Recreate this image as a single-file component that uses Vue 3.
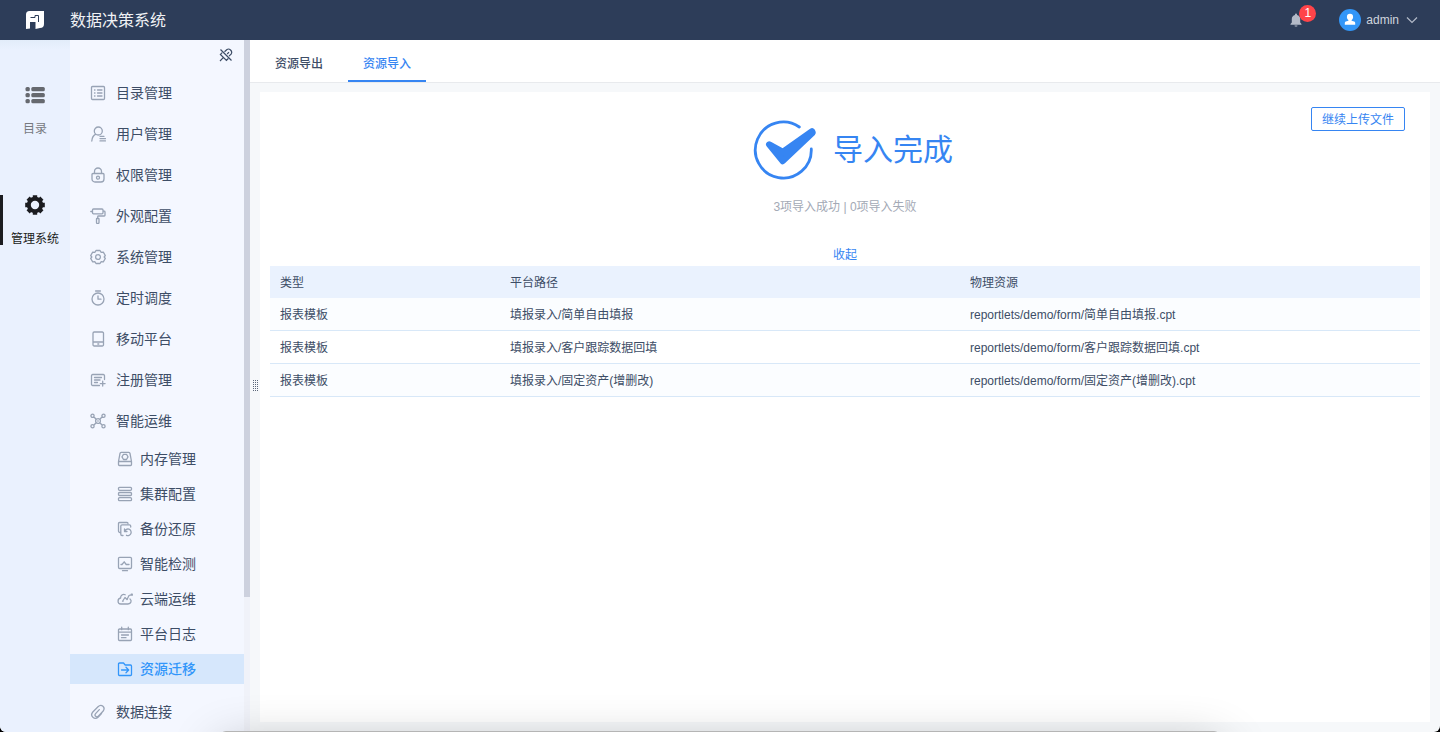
<template>
  <div class="page">
    <header class="header">
      <svg class="logo" viewBox="0 0 18 18">
        <path d="M3.500 0H18v13a4 4 0 0 1-4 4L9.500 18v-7H4v6.500L0 18V3.500A3.500 3.500 0 0 1 3.500 0z" fill="#fff" />
        <path d="M4.500 6.500h4.500V4.500h3.500V11" fill="none" stroke="#2d3d59" stroke-width="1" />
      </svg>
      <h1 class="title">数据决策系统</h1>
      <button class="bell" aria-label="消息">
        <svg viewBox="0 0 12 14">
          <path
            d="M6 0.500a1 1 0 0 1 1 1v.4c2 .5 3.200 2 3.200 4v3.600l1.300 1.500v.7H.5V11l1.300-1.500V5.900c0-2 1.200-3.500 3.200-4v-.4a1 1 0 0 1 1-1zM4.500 12.400h3a1.500 1.200 0 0 1-3 0z"
            fill="#b3bac8"
          />
        </svg>
        <span class="badge">1</span>
      </button>
      <button class="user">
        <svg class="avatar" viewBox="0 0 22 22">
          <circle cx="11" cy="11" r="11" fill="#3296f8" />
          <path
            d="M11 4.800a3.100 3.100 0 0 1 3.100 3.100c0 1.300-.6 2.300-1.500 3v.8l2.600.9c.7.300 1 .8 1 1.500v1.700H5.800v-1.700c0-.7.300-1.200 1-1.500l2.600-.9v-.8c-.9-.7-1.500-1.700-1.500-3A3.100 3.100 0 0 1 11 4.800z"
            fill="#fff"
          />
        </svg>
        <span>admin</span>
        <svg class="chevron" viewBox="0 0 12 8">
          <path d="M1 1.500l5 5 5-5" fill="none" stroke="#b3bac8" stroke-width="1.200" />
        </svg>
      </button>
    </header>

    <div class="body">
      <nav class="rail">
        <a href="#" class="rail-item">
          <svg viewBox="0 0 20 20" fill="#66696f">
            <template v-for="y in [2, 8, 14]" :key="y">
              <rect x="0.500" :y="y" width="4.300" height="4.300" rx="1.500" />
              <rect x="6.300" :y="y" width="13.500" height="4.300" rx="1.500" />
            </template>
          </svg>
          <span>目录</span>
        </a>
        <a href="#" class="rail-item active">
          <svg viewBox="0 0 20 20">
            <circle cx="10" cy="10" r="6.200" fill="none" stroke="#1b1c20" stroke-width="4" />
            <path
              d="M10 .2v3M10 16.800v3M.2 10h3M16.800 10h3M3.100 3.100l2 2M14.900 14.900l2 2M3.100 16.900l2-2M14.900 5.100l2-2"
              stroke="#1b1c20"
              stroke-width="4.400"
            />
          </svg>
          <span>管理系统</span>
        </a>
      </nav>

      <nav class="menu">
        <div class="menu-top">
          <button class="pin" aria-label="取消固定">
            <svg viewBox="0 0 14 14">
              <path
                d="M1.500 1.500l11 11M5.500 3.800L8 1.500c2.200-1.600 5.800 1.600 4.300 4.300l-2.300 2.400M3.200 4.600L1.400 6.400l6 6 1.900-1.900M4 9.900L1 13M8.200 6L10 4.200"
              />
            </svg>
          </button>
        </div>
        <template v-for="item in menu" :key="item.label">
          <a href="#" class="item">
            <svg class="icon" viewBox="0 0 16 16"><path :d="item.icon" /></svg>
            <span>{{ item.label }}</span>
          </a>
          <div v-if="item.children" class="sub-list">
            <a
              v-for="child in item.children"
              :key="child.label"
              href="#"
              class="sub-item"
              :class="{ active: child.label === current }"
              @click.prevent="current = child.label"
            >
              <svg class="icon" viewBox="0 0 16 16"><path :d="child.icon" /></svg>
              <span>{{ child.label }}</span>
            </a>
          </div>
        </template>
      </nav>
      <div class="scroll-track"><div class="scroll-thumb"></div></div>

      <main class="main">
        <div class="tabs">
          <button
            v-for="tab in tabs"
            :key="tab"
            class="tab"
            :class="{ active: tab === activeTab }"
            @click="activeTab = tab"
          >{{ tab }}</button>
        </div>
        <div class="content">
          <div class="splitter"><span class="grip"></span></div>
          <section class="panel">
            <div class="result">
              <div class="summary">
                <h2 class="result-title">
                  <svg viewBox="0 0 80 64">
                    <path
                      d="M62.300 9A28 28 0 1 0 74.300 31"
                      fill="none"
                      stroke="#3685f2"
                      stroke-width="2.800"
                      stroke-linecap="round"
                    />
                    <path
                      d="M32.300 26.500l13.700 7.500L75 13.500l.6 1.200L45.700 43z"
                      fill="#3685f2"
                      stroke="#3685f2"
                      stroke-width="6.500"
                      stroke-linejoin="round"
                    />
                  </svg>
                  <span>导入完成</span>
                </h2>
                <p class="counts">3项导入成功 | 0项导入失败</p>
                <button class="toggle" @click="expanded = !expanded">{{ expanded ? '收起' : '展开' }}</button>
              </div>
              <button class="upload">继续上传文件</button>
            </div>
            <table v-if="expanded" class="table">
              <thead>
                <tr>
                  <th class="type">类型</th>
                  <th>平台路径</th>
                  <th>物理资源</th>
                </tr>
              </thead>
              <tbody>
                <tr v-for="row in rows" :key="row.file">
                  <td>{{ row.type }}</td>
                  <td>{{ row.path }}</td>
                  <td>{{ row.file }}</td>
                </tr>
              </tbody>
            </table>
          </section>
        </div>
      </main>
    </div>
    <div class="bottom-shadow"></div>
  </div>
</template>

<script setup>
import { ref } from 'vue';

const current = ref('资源迁移');
const activeTab = ref('资源导入');
const expanded = ref(true);

const tabs = ['资源导出', '资源导入'];

const rows = [
  { type: '报表模板', path: '填报录入/简单自由填报', file: 'reportlets/demo/form/简单自由填报.cpt' },
  { type: '报表模板', path: '填报录入/客户跟踪数据回填', file: 'reportlets/demo/form/客户跟踪数据回填.cpt' },
  { type: '报表模板', path: '填报录入/固定资产(增删改)', file: 'reportlets/demo/form/固定资产(增删改).cpt' }
];

const menu = [
  {
    label: '目录管理',
    icon: 'M2.500 1.500h11a1 1 0 0 1 1 1v11a1 1 0 0 1-1 1h-11a1 1 0 0 1-1-1v-11a1 1 0 0 1 1-1zM4.500 5h.5M7.500 5h4.500M4.500 8h.5M7.500 8h4.500M4.500 11h.5M7.500 11h4.500'
  },
  {
    label: '用户管理',
    icon: 'M8.300 1a4 4 0 1 1 0 8a4 4 0 1 1 0-8M5.800 8.200C3.300 9.500 2 12 1.800 15M10 10.300h4M10 12.600h5.500M10 14.900h5.500'
  },
  {
    label: '权限管理',
    icon: 'M3 6.500h10a1 1 0 0 1 1 1V12a3 3 0 0 1-3 3H5a3 3 0 0 1-3-3V7.500a1 1 0 0 1 1-1zM4.500 6.500V4.500a3.500 3.500 0 0 1 7 0v2M8 9.200a1.500 1.500 0 1 1 0 3a1.500 1.500 0 1 1 0-3'
  },
  {
    label: '外观配置',
    icon: 'M3.500 1h8.500a1 1 0 0 1 1 1v2.800a1 1 0 0 1-1 1H3.500a1 1 0 0 1-1-1V2a1 1 0 0 1 1-1zM.8 3.500h1.700M13 3.200h1.200a.8.8 0 0 1 .8.800v3.200a.8.800 0 0 1-.8.800H8.500a.8.800 0 0 0-.8.800v1.700M7 10.500h1.500a.5.500 0 0 1 .5.500v3.500a1.200 1 0 0 1-2.500 0V11a.5.500 0 0 1 .5-.5z'
  },
  {
    label: '系统管理',
    icon: 'M6 1.500h4l1.200 1.800 2.100-.1 2 3.300-1.100 1.500 1.100 1.500-2 3.300-2.100-.1L10 14.500H6l-1.200-1.800-2.100.1-2-3.300L1.800 8 .7 6.500l2-3.300 2.100.1zM8 5.600a2.400 2.400 0 1 1 0 4.800a2.400 2.400 0 1 1 0-4.800'
  },
  {
    label: '定时调度',
    icon: 'M8 3a6 6 0 1 1 0 12a6 6 0 1 1 0-12M5.600 1h4.800M8 6v3.200h3'
  },
  {
    label: '移动平台',
    icon: 'M4.200 1h8.100a1.200 1.200 0 0 1 1.200 1.200v11.600a1.200 1.200 0 0 1-1.200 1.200H4.200A1.200 1.200 0 0 1 3 13.800V2.200A1.200 1.200 0 0 1 4.200 1zM3 11h10.500M7.800 13h1'
  },
  {
    label: '注册管理',
    icon: 'M14.500 7.500V3.700a1.200 1.200 0 0 0-1.200-1.200H2.700a1.200 1.200 0 0 0-1.200 1.200v8.600a1.200 1.200 0 0 0 1.200 1.200h6.800M4.500 5.500h7M4.500 8h5.500M4.500 10.500h3M12.700 9.200v4.800M10.300 11.600h4.800'
  },
  {
    label: '智能运维',
    icon: 'M2.500 1.200a1.600 1.600 0 1 1 0 3.200a1.600 1.600 0 1 1 0-3.200M13.500 1.200a1.600 1.600 0 1 1 0 3.200a1.600 1.600 0 1 1 0-3.200M2.500 11.600a1.600 1.600 0 1 1 0 3.200a1.600 1.600 0 1 1 0-3.200M13.500 11.600a1.600 1.600 0 1 1 0 3.200a1.600 1.600 0 1 1 0-3.200M8 5.600a2.400 2.400 0 1 1 0 4.800a2.400 2.400 0 1 1 0-4.800M3.800 3.800l2.300 2.500M12.200 3.800L9.900 6.300M3.800 12.200l2.300-2.500M12.200 12.200L9.900 9.700M7.800 8h.4',
    children: [
      {
        label: '内存管理',
        icon: 'M1.500 10.500L3 2.300A1.200 1.200 0 0 1 4.200 1.300h7.600A1.200 1.200 0 0 1 13 2.300l1.500 8.200M1.500 10.500h13v3a1 1 0 0 1-1 1h-11a1 1 0 0 1-1-1zM6.500 3.300h3L11 5.900 9.500 8.500h-3L5 5.900z'
      },
      {
        label: '集群配置',
        icon: 'M2.500 1.300h11a1 1 0 0 1 1 1v1a1 1 0 0 1-1 1h-11a1 1 0 0 1-1-1v-1a1 1 0 0 1 1-1zM2.500 6.500h11a1 1 0 0 1 1 1v1a1 1 0 0 1-1 1h-11a1 1 0 0 1-1-1v-1a1 1 0 0 1 1-1zM2.500 11.700h11a1 1 0 0 1 1 1v1a1 1 0 0 1-1 1h-11a1 1 0 0 1-1-1v-1a1 1 0 0 1 1-1z'
      },
      {
        label: '备份还原',
        icon: 'M3 11.500a1.500 1.500 0 0 1-1.500-1.500V2.500a1 1 0 0 1 1-1h7.500a1 1 0 0 1 1 1M6 14.500H5a1.200 1.200 0 0 1-1.200-1.200V5A1.200 1.200 0 0 1 5 3.800h7.500A1.200 1.200 0 0 1 13.700 5v1M7.500 8v2.500H10M7.700 10.300a3.300 3.300 0 1 1 1.800 4'
      },
      {
        label: '智能检测',
        icon: 'M2.700 1.300h10.600a1.200 1.200 0 0 1 1.200 1.200v8.800a1.200 1.200 0 0 1-1.200 1.200H2.700a1.200 1.200 0 0 1-1.200-1.200V2.500a1.200 1.200 0 0 1 1.200-1.200zM4 8.500h1L7.200 5.800l2 2.700h2.800M5.500 14.700h5'
      },
      {
        label: '云端运维',
        icon: 'M8.200 3.800C5.800 2.500 3.500 4.500 3.600 7 .2 7.500.2 13 3.800 13H11c3.200 0 4-3.500 2-5M6 9.500l2-3 2 2L12 4.500l2.500-.8M5.500 10.200h.6M14.300 3.200h1v1h-1zM9.800 8.300h.6'
      },
      {
        label: '平台日志',
        icon: 'M2.500 3h11a1 1 0 0 1 1 1v9.500a1 1 0 0 1-1 1h-11a1 1 0 0 1-1-1V4a1 1 0 0 1 1-1zM1.500 6.200h13M4.700 1.200v2.500M11.300 1.200v2.500M4.500 9h7M4.500 11.700h4.500'
      },
      {
        label: '资源迁移',
        icon: 'M2.500 2h4l1.700 2h5.300a1 1 0 0 1 1 1v8.500a1 1 0 0 1-1 1h-11a1 1 0 0 1-1-1V3a1 1 0 0 1 1-1zM4.500 9h7M9 6.300L11.700 9 9 11.700'
      }
    ]
  },
  {
    label: '数据连接',
    icon: 'M11.500 9.500L8.300 13C4.500 16.500-.5 12 2.800 8L8 2.700c3.500-3.300 8 .7 5 4.600L8.500 12c-2 2-4.600-.4-2.900-2.400L9.300 5.600'
  }
];
</script>

<style>
html,
body {
  background: #000;
}
</style>

<style scoped>
* {
  box-sizing: border-box;
}

.page {
  display: flex;
  flex-direction: column;
  min-height: 100vh;
  overflow: hidden;
  border-radius: 0 0 6px 6px;
  background: #f6f8fa;
  color: #3d4d66;
  font-family: "Liberation Sans", "Noto Sans CJK SC", sans-serif;
  font-size: 12px;
  line-height: 14px;
}

button {
  padding: 0;
  border: 0;
  background: none;
  color: inherit;
  font: inherit;
  cursor: pointer;
}

a {
  color: inherit;
  text-decoration: none;
}

svg {
  display: block;
  flex: none;
}

.header {
  display: flex;
  align-items: center;
  height: 40px;
  padding: 0 22px 0 26px;
  background: #2d3d59;
  color: #d0d5de;
}

.logo {
  width: 18px;
  height: 18px;
}

.title {
  flex: 1;
  margin: 0 0 0 26px;
  padding-top: 2px;
  color: #f0f2f5;
  font-size: 16px;
  font-weight: 400;
  line-height: 24px;
}

.bell {
  position: relative;
  margin-right: 37px;
}

.bell svg {
  width: 12px;
  height: 14px;
}

.badge {
  position: absolute;
  top: -8px;
  left: 9px;
  width: 17px;
  height: 17px;
  border-radius: 50%;
  background: #ff4449;
  color: #fff;
  line-height: 17px;
  text-align: center;
}

.user {
  display: flex;
  align-items: center;
  gap: 5px;
}

.avatar {
  width: 22px;
  height: 22px;
}

.chevron {
  width: 12px;
  height: 8px;
  margin-left: 2px;
}

.body {
  display: flex;
  flex: 1;
}

.rail {
  display: flex;
  flex: none;
  flex-direction: column;
  gap: 60px;
  width: 70px;
  padding-top: 45px;
  background: linear-gradient(#e2ecf9, #eaf1fe 10px);
}

.rail-item {
  display: flex;
  flex-direction: column;
  align-items: center;
  gap: 17px;
  height: 50px;
  color: #77797f;
}

.rail-item svg {
  width: 20px;
  height: 20px;
}

.rail-item.active {
  background: linear-gradient(#1b1c20, #1b1c20) left / 3px 100% no-repeat;
  color: #1b1c20;
}

.menu {
  flex: none;
  width: 174px;
  background: #f4f7ff;
  font-size: 14px;
  line-height: 20px;
}

.menu-top {
  display: flex;
  justify-content: flex-end;
  height: 32px;
  padding: 8px 11px 0 0;
}

.pin,
.pin svg {
  width: 14px;
  height: 14px;
}

.pin path {
  fill: none;
  stroke: #3d4d66;
  stroke-width: 1.2;
}

.item {
  display: flex;
  align-items: center;
  gap: 10px;
  height: 41px;
  padding-left: 20px;
}

.icon {
  width: 16px;
  height: 16px;
}

.icon path {
  fill: none;
  stroke: #98a3b5;
  stroke-width: 1.3;
  stroke-linecap: round;
  stroke-linejoin: round;
}

.sub-list {
  display: flex;
  flex-direction: column;
  gap: 5px;
  padding: 3px 0 7px;
}

.sub-item {
  display: flex;
  align-items: center;
  gap: 7px;
  height: 30px;
  padding-left: 47px;
}

.sub-item.active {
  background: #d6e7fc;
  color: #3296fa;
  font-weight: 500;
}

.sub-item.active path {
  stroke: #3296fa;
}

.scroll-track {
  flex: none;
  width: 6px;
  background: #f0f2f9;
}

.scroll-thumb {
  height: 557px;
  background: #cdd1de;
}

.main {
  display: flex;
  flex: 1;
  flex-direction: column;
  min-width: 0;
}

.tabs {
  display: flex;
  gap: 10px;
  height: 43px;
  padding-left: 10px;
  border-bottom: 1px solid #e8eaed;
  background: #fff;
}

.tab {
  padding: 8px 15px 0;
  border-bottom: 2px solid transparent;
  font-weight: 500;
}

.tab.active {
  border-color: #3685f2;
  color: #3685f2;
}

.content {
  display: flex;
  flex: 1;
  padding: 9px 10px 10px 0;
}

.splitter {
  display: flex;
  flex: none;
  align-items: center;
  justify-content: center;
  width: 10px;
  padding-bottom: 42px;
}

.grip {
  width: 5px;
  height: 12px;
  background:
    linear-gradient(90deg, transparent 1px, #f6f8fa 1px) 0 0 / 2px 2px,
    linear-gradient(#5c6779 1px, transparent 1px) 0 0 / 2px 2px;
}

.panel {
  flex: 1;
  min-width: 0;
  padding: 0 10px;
  background: #fff;
}

.result {
  display: grid;
  grid-template-columns: 1fr auto 1fr;
}

.summary {
  display: flex;
  grid-column: 2;
  flex-direction: column;
  align-items: center;
  padding-top: 26px;
}

.result-title {
  display: flex;
  align-items: center;
  gap: 16px;
  margin: 0;
  color: #3685f2;
  font-size: 30px;
  font-weight: 400;
  line-height: 40px;
}

.result-title svg {
  width: 80px;
  height: 64px;
}

.counts {
  margin: 17px 0 0;
  color: #a3a9b5;
  line-height: 16px;
}

.toggle {
  height: 24px;
  margin-top: 27px;
  padding-top: 2px;
  color: #3685f2;
}

.upload {
  align-self: start;
  justify-self: end;
  width: 94px;
  height: 24px;
  margin: 15px 15px 0 0;
  padding-top: 2px;
  border: 1px solid #3685f2;
  border-radius: 2px;
  color: #3685f2;
}

.table {
  width: 100%;
  border-collapse: separate;
  border-spacing: 0;
  table-layout: fixed;
}

.table th,
.table td {
  padding: 2px 10px 0;
  font-weight: 400;
  text-align: left;
}

.table th {
  height: 32px;
  background: #eaf2fe;
}

.table .type {
  width: 20%;
}

.table td {
  height: 33px;
  border-bottom: 1px solid #d8e8f8;
}

.table tbody tr:nth-child(odd) {
  background: #fbfdff;
}

/* soft shadow rising from the bottom edge of the window */
.bottom-shadow {
  position: fixed;
  right: 220px;
  bottom: -59px;
  left: 220px;
  height: 60px;
  border-radius: 6px;
  background: #b5b5b5;
  box-shadow: 0 16px 50px rgba(0, 0, 0, 0.3);
  pointer-events: none;
}
</style>
